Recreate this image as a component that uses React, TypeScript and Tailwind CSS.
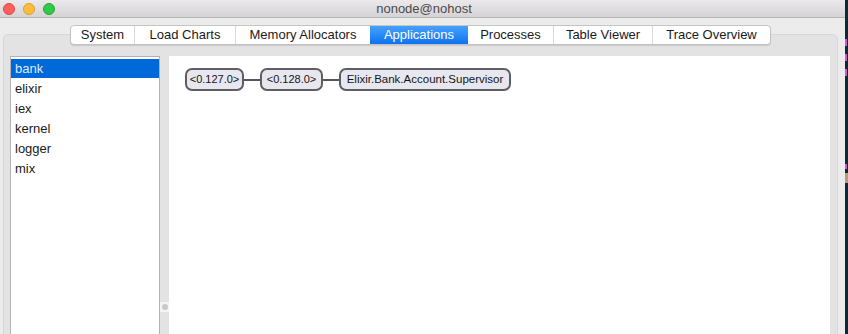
const tabs = [
  { label: "System", w: "w-[63px]" },
  { label: "Load Charts", w: "w-[101px]" },
  { label: "Memory Allocators", w: "w-[135px]" },
  { label: "Applications", w: "w-[98px]", active: true },
  { label: "Processes", w: "w-[85px]" },
  { label: "Table Viewer", w: "w-[99px]" },
  { label: "Trace Overview", w: "w-[118px]" },
];

const apps = ["bank", "elixir", "iex", "kernel", "logger", "mix"];

function Node({ label, w }: { label: string; w: string }) {
  return (
    <div className={`${w} h-[23px] flex items-center justify-center rounded-[7px] border-2 border-[#5f5f63] bg-[#e7e7ef] text-[#161616] whitespace-nowrap`}>
      {label}
    </div>
  );
}

function Edge() {
  return <div className="w-[16px] h-[2px] bg-[#55555a]" />;
}

export default function App() {
  return (
    <div className="w-[848px] h-[334px] flex overflow-hidden font-['Liberation_Sans',Arial,sans-serif] text-[13px]">
      {/* window */}
      <div className="w-[845px] h-full flex flex-col bg-[#ececec]">
        {/* title bar */}
        <div className="h-[18px] shrink-0 flex items-center relative bg-gradient-to-b from-[#ebe9eb] to-[#d5d3d5] border-b border-[#b4b4b4]">
          <div className="flex gap-[8px] pl-[3px]">
            <span className="w-[12px] h-[12px] rounded-full bg-[#fc605c] border border-[#e0443e]" />
            <span className="w-[12px] h-[12px] rounded-full bg-[#fdbc40] border border-[#dea123]" />
            <span className="w-[12px] h-[12px] rounded-full bg-[#34c84a] border border-[#1aab29]" />
          </div>
          <div className="flex-1 text-center text-[#4b4b4b] pr-[52px] leading-none">nonode@nohost</div>
        </div>

        {/* body */}
        <div className="flex-1 relative pt-[16px] px-[3px] pr-[7px]">
          {/* tab bar lies over the panel top */}
          <div className="absolute left-[70px] top-[7px] z-10 flex h-[20px] rounded-[4px] bg-white border border-[#c4c4c4] shadow-[0_1px_1px_rgba(0,0,0,0.12)] overflow-hidden">
            {tabs.map((t, i) => (
              <div
                key={t.label}
                className={
                  t.active
                    ? `${t.w} flex items-center justify-center text-white bg-gradient-to-b from-[#45a1fc] to-[#0b72f1]`
                    : `${t.w} flex items-center justify-center text-[#1a1a1a] ${i > 0 && !tabs[i - 1].active ? "border-l border-[#dadada]" : ""}`
                }
              >
                {t.label}
              </div>
            ))}
          </div>

          {/* panel */}
          <div className="h-[320px] rounded-[5px] bg-[#e3e3e3] border border-[#d8d8d8] pt-[21px] pl-[6px] pr-[7px] flex">
            {/* list */}
            <div className="w-[150px] h-full bg-white border border-[#b3b3b3] border-b-0 pt-[2px]">
              {apps.map((a, i) => (
                <div
                  key={a}
                  className={
                    i === 0
                      ? "h-[19px] mb-[1px] pl-[4px] flex items-center bg-[#0069d9] text-[#dfeaff]"
                      : "h-[20px] pl-[4px] flex items-center text-[#1a1a1a]"
                  }
                >
                  {a}
                </div>
              ))}
            </div>

            {/* splitter */}
            <div className="w-[9px] h-full flex flex-col">
              <div className="h-[246px]" />
              <div className="h-[10px] bg-[#f4f4f4] flex items-center justify-center">
                <span className="w-[6px] h-[6px] rounded-full bg-[#c9c9c9]" />
              </div>
            </div>

            {/* application tree */}
            <div className="flex-1 h-full bg-white pt-[12px] pl-[16px]">
              <div className="flex items-center text-[11px]">
                <Node label="<0.127.0>" w="w-[59px]" />
                <Edge />
                <Node label="<0.128.0>" w="w-[63px]" />
                <Edge />
                <div className="text-[11.5px]">
                  <Node label="Elixir.Bank.Account.Supervisor" w="w-[172px]" />
                </div>
              </div>
            </div>
          </div>
        </div>
      </div>

      {/* neighbouring terminal window edge with clipped glyph fragments */}
      <div className="w-[3px] h-full bg-[#0d2a35] flex flex-col items-start gap-[8px] pt-[39px]">
        <span className="w-[2px] h-[7px] bg-[#c45cc8]" />
        <span className="w-[2px] h-[7px] bg-[#c45cc8]" />
        <span className="w-[2px] h-[7px] bg-[#c45cc8]" />
        <span className="w-[2px] h-[5px] mt-[80px] bg-[#c45cc8]" />
        <span className="w-[3px] h-[10px] -mt-[4px] bg-[#b79a7a]" />
      </div>
    </div>
  );
}
